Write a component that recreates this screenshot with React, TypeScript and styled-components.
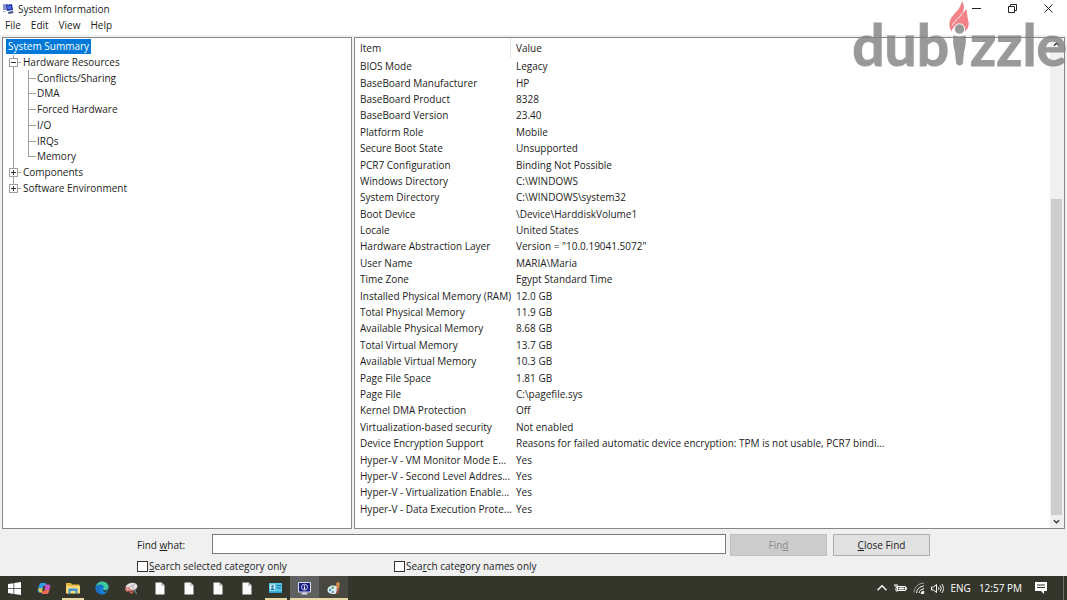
import React from "react";
import styled, { createGlobalStyle, css } from "styled-components";

const GlobalStyle = createGlobalStyle`
  * { box-sizing: border-box; }
  body {
    margin: 0;
    background: #f0f0f0;
    color: #1c1c1c;
    font: 10px/16px "Open Sans", "Noto Sans", sans-serif;
  }
  button, input { font: inherit; color: inherit; }
`;

const Page = styled.div`
  position: relative;
  display: flex;
  flex-direction: column;
  min-height: 100vh;
  overflow: hidden;
`;

const TitleBar = styled.header`
  display: flex;
  align-items: center;
  height: 17px;
  padding: 0 1px 0 2px;
  background: #fff;
`;

const Title = styled.h1`
  flex: 1;
  margin: 0;
  padding: 1px 0 0 4px;
  font-size: 10px;
  line-height: 16px;
  font-weight: 400;
`;

const WindowButton = styled.button`
  display: grid;
  place-items: center;
  width: 36px;
  height: 16px;
  padding: 0;
  border: 0;
  background: none;
`;

const MenuBar = styled.nav`
  display: flex;
  gap: 10px;
  height: 18px;
  padding-left: 5px;
  background: #fff;
`;

const MenuButton = styled.button`
  height: 16px;
  padding: 0;
  border: 0;
  background: none;
  line-height: 16px;
`;

const Panes = styled.main`
  display: flex;
  flex: 1;
  gap: 2px;
  padding: 2px 2px 0;
`;

const Pane = styled.section<{ $basis?: string }>`
  display: flex;
  flex: ${(p) => (p.$basis ? `0 0 ${p.$basis}` : "1")};
  min-width: 0;
  border: 1px solid #828790;
  background: #fff;
`;

const Tree = styled.ul`
  display: grid;
  grid-auto-rows: 1fr;
  width: 100%;
  height: 158px;
  margin: 0;
  padding: 1px 0 0 3px;
  line-height: 15px;
  list-style: none;
`;

const TreeRow = styled.li`
  display: flex;
  align-items: center;
`;

const TreeLabel = styled.span<{ $selected?: boolean }>`
  white-space: nowrap;
  ${(p) =>
    p.$selected &&
    css`
      padding: 0 2px;
      background: #0078d7;
      color: #fff;
    `}
`;

type Line = "full" | "top";

const Guide = styled.span<{ $line: Line; $branch?: boolean; $inner?: boolean }>`
  display: flex;
  align-items: center;
  align-self: stretch;
  flex: none;
  width: ${(p) => (p.$inner ? 14 : 17)}px;
  padding-left: 3px;
  background-image: linear-gradient(#a0a0a0, #a0a0a0), linear-gradient(#a0a0a0, #a0a0a0);
  background-repeat: no-repeat;
  background-size: 1px ${(p) => (p.$line === "full" ? "100%" : "50%")}, ${(p) => (p.$branch ? 8 : 0)}px 1px;
  background-position: ${(p) => (p.$inner ? 5 : 7)}px 0, ${(p) => (p.$inner ? 5 : 7)}px 50%;
`;

const Toggle = styled.button`
  display: grid;
  place-items: center;
  width: 9px;
  height: 9px;
  padding: 0;
  border: 1px solid #a0a0a0;
  background: #fff;
`;

const Details = styled.div`
  flex: 1;
  min-width: 0;
  overflow: hidden;
`;

const DataTable = styled.table`
  width: 100%;
  height: 479px;
  border-spacing: 0;
  table-layout: fixed;
`;

const HeadCell = styled.th<{ $width?: string }>`
  width: ${(p) => p.$width ?? "auto"};
  height: 20px;
  padding: 0 0 0 5px;
  border-right: ${(p) => (p.$width ? "1px solid #e5e5e5" : "0")};
  font-weight: 400;
  text-align: left;
`;

const Cell = styled.td`
  padding: 0 0 0 5px;
  white-space: nowrap;
`;

const ScrollBar = styled.div`
  display: flex;
  flex-direction: column;
  width: 14px;
  padding-right: 1px;
  background: #f0f0f0;
`;

const ScrollButton = styled.button`
  display: grid;
  place-items: center;
  height: 13px;
  padding: 0;
  border: 0;
  background: #f0f0f0;
`;

const ScrollTrack = styled.div`
  display: flex;
  flex: 1;
  flex-direction: column;
  justify-content: flex-end;
  padding: 0 1px;
`;

const ScrollThumb = styled.div`
  height: 68%;
  background: #cdcdcd;
`;

const FindForm = styled.form`
  display: flex;
  flex-direction: column;
  gap: 2px;
  padding: 4px 137px 2px;
`;

const FindRow = styled.div`
  display: flex;
  align-items: center;
  height: 23px;
`;

const FindLabel = styled.label`
  width: 75px;
`;

const FindInput = styled.input`
  flex: 1;
  min-width: 0;
  height: 20px;
  margin: 0 4px 2px 0;
  border: 1px solid #7a7a7a;
  background: #fff;
`;

const FormButton = styled.button`
  width: 97px;
  height: 22px;
  padding: 0;
  border: 1px solid #adadad;
  background: #e1e1e1;
  & + & { margin-left: 6px; }
  &:disabled {
    border-color: #bfbfbf;
    background: #cccccc;
    color: #8b8b8b;
  }
`;

const CheckRow = styled.div`
  display: grid;
  grid-template-columns: 257px 1fr;
  height: 16px;
`;

const CheckLabel = styled.label`
  display: flex;
  align-items: center;
  gap: 1px;
`;

const CheckBox = styled.input`
  appearance: none;
  width: 11px;
  height: 11px;
  margin: 0;
  border: 1px solid #333;
  background: #fff;
`;

const TaskBar = styled.footer`
  display: flex;
  align-items: stretch;
  height: 24px;
  background: #34352b;
  color: #fff;
`;

const TaskButton = styled.button<{ $open?: boolean; $shade?: string }>`
  display: grid;
  place-items: center;
  width: 29px;
  padding: 0;
  border: 0;
  background-color: ${(p) => p.$shade ?? "transparent"};
  ${(p) =>
    p.$open &&
    css`
      background-image: linear-gradient(#e9d9a6, #e9d9a6);
      background-repeat: no-repeat;
      background-size: ${p.$shade ? "100%" : "22px"} 2px;
      background-position: bottom;
    `}
`;

const Tray = styled.div`
  display: flex;
  align-items: center;
  gap: 6px;
  margin-left: auto;
  padding-right: 3px;
`;

const TrayText = styled.span`
  padding: 0 1px;
  white-space: nowrap;
`;

const TrayButton = styled.button`
  display: grid;
  place-items: center;
  padding: 0;
  border: 0;
  background: none;
`;

const ActionButton = styled(TrayButton)`
  padding: 0 10px 0 6px;
`;

const ShowDesktop = styled.span`
  align-self: stretch;
  width: 1px;
  background: #6e6f66;
`;

const Watermark = styled.div`
  position: absolute;
  top: 0;
  right: 0;
  display: flex;
  height: 80px;
  color: #808080;
  font: 700 57px/88px Lato, sans-serif;
  -webkit-text-stroke: 1px #808080;
  opacity: 0.8;
  pointer-events: none;
`;

const tree: { label: string; level: number; open?: boolean; last?: boolean }[] = [
  { label: "System Summary", level: 0 },
  { label: "Hardware Resources", level: 1, open: true },
  { label: "Conflicts/Sharing", level: 2 },
  { label: "DMA", level: 2 },
  { label: "Forced Hardware", level: 2 },
  { label: "I/O", level: 2 },
  { label: "IRQs", level: 2 },
  { label: "Memory", level: 2, last: true },
  { label: "Components", level: 1 },
  { label: "Software Environment", level: 1, last: true },
];

const rows: [string, string][] = [
  ["BIOS Mode", "Legacy"],
  ["BaseBoard Manufacturer", "HP"],
  ["BaseBoard Product", "8328"],
  ["BaseBoard Version", "23.40"],
  ["Platform Role", "Mobile"],
  ["Secure Boot State", "Unsupported"],
  ["PCR7 Configuration", "Binding Not Possible"],
  ["Windows Directory", "C:\\WINDOWS"],
  ["System Directory", "C:\\WINDOWS\\system32"],
  ["Boot Device", "\\Device\\HarddiskVolume1"],
  ["Locale", "United States"],
  ["Hardware Abstraction Layer", 'Version = "10.0.19041.5072"'],
  ["User Name", "MARIA\\Maria"],
  ["Time Zone", "Egypt Standard Time"],
  ["Installed Physical Memory (RAM)", "12.0 GB"],
  ["Total Physical Memory", "11.9 GB"],
  ["Available Physical Memory", "8.68 GB"],
  ["Total Virtual Memory", "13.7 GB"],
  ["Available Virtual Memory", "10.3 GB"],
  ["Page File Space", "1.81 GB"],
  ["Page File", "C:\\pagefile.sys"],
  ["Kernel DMA Protection", "Off"],
  ["Virtualization-based security", "Not enabled"],
  ["Device Encryption Support", "Reasons for failed automatic device encryption: TPM is not usable, PCR7 bindi..."],
  ["Hyper-V - VM Monitor Mode E...", "Yes"],
  ["Hyper-V - Second Level Addres...", "Yes"],
  ["Hyper-V - Virtualization Enable...", "Yes"],
  ["Hyper-V - Data Execution Prote...", "Yes"],
];

const AppIcon = () => (
  <svg width="12" height="12" viewBox="0 0 12 12">
    <path d="M1 1h5v6H1z" fill="#8b93c9" />
    <path d="M4 2l6-1 1 6-6 1z" fill="#1d2fa8" />
    <path d="M5 3l4-.6.6 3.6-4 .6z" fill="#4c6be0" />
    <path d="M6 9l5-1 .5 2-5 1z" fill="#4a5088" />
    <path d="M1 8h3v1H1z" fill="#b9bedb" />
  </svg>
);

const Chevron = ({ up, color = "#333", size = 7 }: { up?: boolean; color?: string; size?: number }) => (
  <svg width={size} height={size} viewBox="0 0 8 8" fill="none" stroke={color} strokeWidth={size > 8 ? 0.9 : 1.5}>
    <path d={up ? "M1 5.5l3-3 3 3" : "M1 2.5l3 3 3-3"} />
  </svg>
);

const WindowsLogo = () => (
  <svg width="13" height="13" viewBox="0 0 13 13" fill="#fff">
    <path d="M0 2l5.5-.8v5H0zM6.2 1.1L13 0v6.2H6.2zM0 6.9h5.5v5L0 11.1zM6.2 6.9H13V13l-6.8-1z" />
  </svg>
);

const CopilotIcon = () => (
  <svg width="14" height="13" viewBox="0 0 14 13">
    <path d="M4 1h4c1 0 1.500.6 1.200 1.500L7 9c-.4 1-1 1.500-2 1.500H2.500C.8 10.500.4 9.200.9 7.600L2.300 3C2.700 1.700 3.200 1 4 1z" fill="#2b9de4" />
    <path d="M1 6.500l1.500 4H5c1 0 1.600-.5 2-1.500L8 6z" fill="#d8c548" />
    <path d="M10 12H6c-1 0-1.500-.6-1.200-1.500L7 4c.4-1 1-1.500 2-1.500h2.500c1.700 0 2.100 1.300 1.600 2.900L11.700 10c-.4 1.300-.9 2-1.700 2z" fill="#c656c4" />
    <path d="M10 12H6c-1 0-1.500-.6-1.200-1.500L6 7.500l6.400.5-.7 2c-.4 1.300-.9 2-1.700 2z" fill="#ef6a54" />
    <path d="M6.300 4h1.900L7.300 9H5.300z" fill="#34352b" />
  </svg>
);

const FolderIcon = () => (
  <svg width="14" height="12" viewBox="0 0 14 12">
    <path d="M0 1h5l1 1.500h7.500V11H0z" fill="#e8b93c" />
    <path d="M0 4h14v7.500H0z" fill="#fbdc78" />
    <path d="M2.500 6.500h9v5h-2V9h-5v2.500h-2z" fill="#3b94d4" />
  </svg>
);

const EdgeIcon = () => (
  <svg width="14" height="14" viewBox="0 0 14 14">
    <circle cx="7" cy="7" r="6.500" fill="#1583d3" />
    <path d="M.7 6C1.500 2.500 4 .5 7.200.5c4 0 6.300 3 6.300 5.500 0 2-1.500 3.200-3.500 3.200-1.500 0-1.800-.7-1.500-1.200C9 7 8.500 4.500 6 4.500 3.500 4.500 1.500 5 .7 6z" fill="#3fc99c" />
    <path d="M.6 6.200C1 4.500 3 3.500 5 3.500c2.500 0 4 1.500 3.800 3.300C8 5.500 5.500 5.500 5 8c-.3 2.500 1.500 4.500 4 5.200C4 14.500.3 11 .6 6.200z" fill="#1b6fc4" />
    <path d="M8.300 8.200c.8 1.400 3 1.600 4.700.4-.6 1.200-1.200 1.800-2 2.200-1.500.4-3.300-.8-2.700-2.600z" fill="#34352b" />
  </svg>
);

const SnipIcon = () => (
  <svg width="14" height="13" viewBox="0 0 14 13">
    <ellipse cx="7.500" cy="5" rx="6" ry="4" fill="#e9dfe2" transform="rotate(-12 7 5)" />
    <path d="M4 6l7-3.500M8 4l3 4" stroke="#a8aebb" />
    <circle cx="3.500" cy="7.500" r="1.700" fill="none" stroke="#d0695c" strokeWidth="1.300" />
    <circle cx="7.500" cy="9.500" r="1.500" fill="none" stroke="#d0695c" strokeWidth="1.300" />
    <path d="M10.500 7.500l2 4.500" stroke="#7fa3c4" />
  </svg>
);

const DocumentIcon = () => (
  <svg width="10" height="13" viewBox="0 0 10 13">
    <path d="M.5.5h6l3 3v9h-9z" fill="#fbfbfb" />
    <path d="M6.500.5v3h3" fill="#d3d3d3" stroke="#999" strokeWidth=".5" />
  </svg>
);

const CardIcon = () => (
  <svg width="13" height="10" viewBox="0 0 13 10">
    <path d="M0 0h13v10H0z" fill="#58c5ea" />
    <path d="M1 1.500h5v6H1z" fill="#d5f1fb" />
    <circle cx="3.500" cy="3.500" r="1.200" fill="#1a6f9d" />
    <path d="M1.500 7c0-2.500 4-2.500 4 0zM7.500 2H12v1H7.500zM7.500 4.500H12v1H7.500z" fill="#1a6f9d" />
    <path d="M0 8.500h13V10H0z" fill="#2f9fd0" />
  </svg>
);

const SystemIcon = () => (
  <svg width="13" height="13" viewBox="0 0 13 13">
    <path d="M.5.5h12v9.500H.5z" fill="#1b1f80" stroke="#d8d9ef" />
    <path d="M3 12.500l1.500-2h4l1.500 2z" fill="#d8d9ef" />
    <circle cx="6.500" cy="5.200" r="3" fill="none" stroke="#b9bdf4" />
    <path d="M6.500 4.500v3M6.500 3v.8" stroke="#fff" strokeWidth="1.200" />
  </svg>
);

const PaintIcon = () => (
  <svg width="14" height="14" viewBox="0 0 14 14">
    <path d="M.5 9c0-3 2.500-4.500 5.500-4.500s5.500 1.500 5.500 4c0 1.500-1.500 1.500-2 2.200s.5 2.300-2.500 2.300C3.500 13 .5 12 .5 9z" fill="#dce9ef" />
    <circle cx="3.200" cy="9" r="1.200" fill="#3e9bd6" />
    <circle cx="5.800" cy="6.700" r="1.200" fill="#50ad5a" />
    <circle cx="5.800" cy="11" r="1.100" fill="#5b7fa0" />
    <path d="M9 3c1-3 4-2.500 3.800 0L12 7.500 9.800 7z" fill="#d58a48" />
    <path d="M9.800 7l2 .5L11 13 9.500 12.500z" fill="#b5543a" />
  </svg>
);

const FlameMan = () => (
  <svg width="21" height="80" viewBox="0 0 21 80">
    <path d="M2.500 31.500C-1 26 0 20 4 15.500 7.500 11.500 11.500 8 13 1c2.500 4 2.500 8 .5 12 1.500-1 2.500-2 3.500-4 1.500 3.500 1 6.500 2 10.500 1.500 5 .5 9-3 12 0-4.500-2-7.500-5.500-7.500s-6.500 3-8 7.500z" fill="#f2656b" />
    <path d="M3 25.500c3-6 8-7.500 10.500-12.500" stroke="#fff" strokeWidth=".9" fill="none" />
    <circle cx="10.500" cy="29" r="5.200" fill="#808080" stroke="#fff" />
    <path d="M4.500 35.500c4 1.200 8 1.200 12 0 1 6 0 11-1.500 16.500L14 62.500c-.4 4-6.600 4-7 0L6 52C4.500 46.500 3.500 41.500 4.500 35.500z" fill="#808080" />
  </svg>
);

const taskItems: { name: string; icon: React.ReactNode; open?: boolean; shade?: string }[] = [
  { name: "Start", icon: <WindowsLogo /> },
  { name: "Copilot", icon: <CopilotIcon /> },
  { name: "File Explorer", icon: <FolderIcon />, open: true },
  { name: "Edge", icon: <EdgeIcon /> },
  { name: "Snipping Tool", icon: <SnipIcon /> },
  { name: "Document 1", icon: <DocumentIcon /> },
  { name: "Document 2", icon: <DocumentIcon /> },
  { name: "Document 3", icon: <DocumentIcon /> },
  { name: "Document 4", icon: <DocumentIcon /> },
  { name: "Control Panel", icon: <CardIcon />, open: true },
  { name: "System Information", icon: <SystemIcon />, open: true, shade: "#5f6060" },
  { name: "Paint", icon: <PaintIcon />, open: true, shade: "#484840" },
];

export default function App() {
  return (
    <Page>
      <GlobalStyle />
      <TitleBar>
        <AppIcon />
        <Title>System Information</Title>
        <WindowButton aria-label="Minimize">
          <svg width="9" height="9" stroke="#222"><path d="M0 4.500h9" /></svg>
        </WindowButton>
        <WindowButton aria-label="Restore">
          <svg width="9" height="9" fill="none" stroke="#222"><path d="M.5 2.500h6v6h-6zM2.500 2.500v-2h6v6h-2" /></svg>
        </WindowButton>
        <WindowButton aria-label="Close">
          <svg width="9" height="9" stroke="#222"><path d="M.5.5l8 8M8.500.5l-8 8" /></svg>
        </WindowButton>
      </TitleBar>
      <MenuBar>
        {["File", "Edit", "View", "Help"].map((m) => (
          <MenuButton key={m}>{m}</MenuButton>
        ))}
      </MenuBar>

      <Panes>
        <Pane $basis="350px">
          <Tree>
            {tree.map((n) => (
              <TreeRow key={n.label}>
                {n.level === 1 && (
                  <Guide $line={n.last ? "top" : "full"} $branch>
                    <Toggle aria-label={`Toggle ${n.label}`}>
                      <svg width="5" height="5" stroke="#333">
                        <path d={n.open ? "M0 2.500h5" : "M0 2.500h5M2.500 0v5"} />
                      </svg>
                    </Toggle>
                  </Guide>
                )}
                {n.level === 2 && (
                  <>
                    <Guide $line="full" />
                    <Guide $line={n.last ? "top" : "full"} $branch $inner />
                  </>
                )}
                <TreeLabel $selected={n.level === 0}>{n.label}</TreeLabel>
              </TreeRow>
            ))}
          </Tree>
        </Pane>
        <Pane>
          <Details>
            <DataTable>
              <thead>
                <tr>
                  <HeadCell $width="156px">Item</HeadCell>
                  <HeadCell>Value</HeadCell>
                </tr>
              </thead>
              <tbody>
                {rows.map(([item, value]) => (
                  <tr key={item}>
                    <Cell>{item}</Cell>
                    <Cell>{value}</Cell>
                  </tr>
                ))}
              </tbody>
            </DataTable>
          </Details>
          <ScrollBar>
            <ScrollButton aria-label="Scroll up"><Chevron up /></ScrollButton>
            <ScrollTrack><ScrollThumb /></ScrollTrack>
            <ScrollButton aria-label="Scroll down"><Chevron /></ScrollButton>
          </ScrollBar>
        </Pane>
      </Panes>

      <FindForm onSubmit={(e) => e.preventDefault()}>
        <FindRow>
          <FindLabel htmlFor="find">Find <u>w</u>hat:</FindLabel>
          <FindInput id="find" type="text" />
          <FormButton type="submit" disabled>Fin<u>d</u></FormButton>
          <FormButton type="button"><u>C</u>lose Find</FormButton>
        </FindRow>
        <CheckRow>
          <CheckLabel><CheckBox type="checkbox" /><span><u>S</u>earch selected category only</span></CheckLabel>
          <CheckLabel><CheckBox type="checkbox" /><span>Sea<u>r</u>ch category names only</span></CheckLabel>
        </CheckRow>
      </FindForm>

      <TaskBar>
        {taskItems.map((t) => (
          <TaskButton key={t.name} aria-label={t.name} $open={t.open} $shade={t.shade}>{t.icon}</TaskButton>
        ))}
        <Tray>
          <TrayButton aria-label="Hidden icons"><Chevron up color="#fff" size={12} /></TrayButton>
          <svg width="13" height="10" viewBox="0 0 13 10" fill="none" stroke="#fff">
            <path d="M3.500 3.500h8v4h-8zM12.500 4.500v2M1 1v2M3 1v2M.5 3h3v1.500H2V8h1.500" />
            <path d="M5 5h5v1H5z" fill="#fff" />
          </svg>
          <svg width="12" height="12" viewBox="0 0 12 12" fill="none" stroke="#fff">
            <path d="M1 10.500C1.500 5 5 1.500 11 1" opacity=".55" />
            <path d="M3.500 11C4 7 6.500 4.500 11 4M6 11c.3-2.200 2-4 5-4.300" />
            <path d="M8.200 11.500c0-1.400 1-2.300 2.500-2.300v2.300z" fill="#fff" />
          </svg>
          <svg width="13" height="11" viewBox="0 0 13 11" fill="none" stroke="#fff">
            <path d="M.5 4h2l3-2.500v8L2.500 7h-2zM7.300 4c.7 1 .7 2 0 3M9 2.500c1.500 2 1.500 4 0 6M10.800 1c2.200 3 2.200 6 0 9" />
          </svg>
          <TrayText>ENG</TrayText>
          <TrayText>12:57 PM</TrayText>
          <ActionButton aria-label="Notifications">
            <svg width="12" height="12" viewBox="0 0 12 12">
              <path d="M0 0h12v9H9v3L6 9H0z" fill="#fff" />
              <path d="M2 3h8M2 5.500h8" stroke="#34352b" />
            </svg>
          </ActionButton>
          <ShowDesktop />
        </Tray>
      </TaskBar>

      <Watermark>
        <span>dub</span>
        <FlameMan />
        <span>zzle</span>
      </Watermark>
    </Page>
  );
}
